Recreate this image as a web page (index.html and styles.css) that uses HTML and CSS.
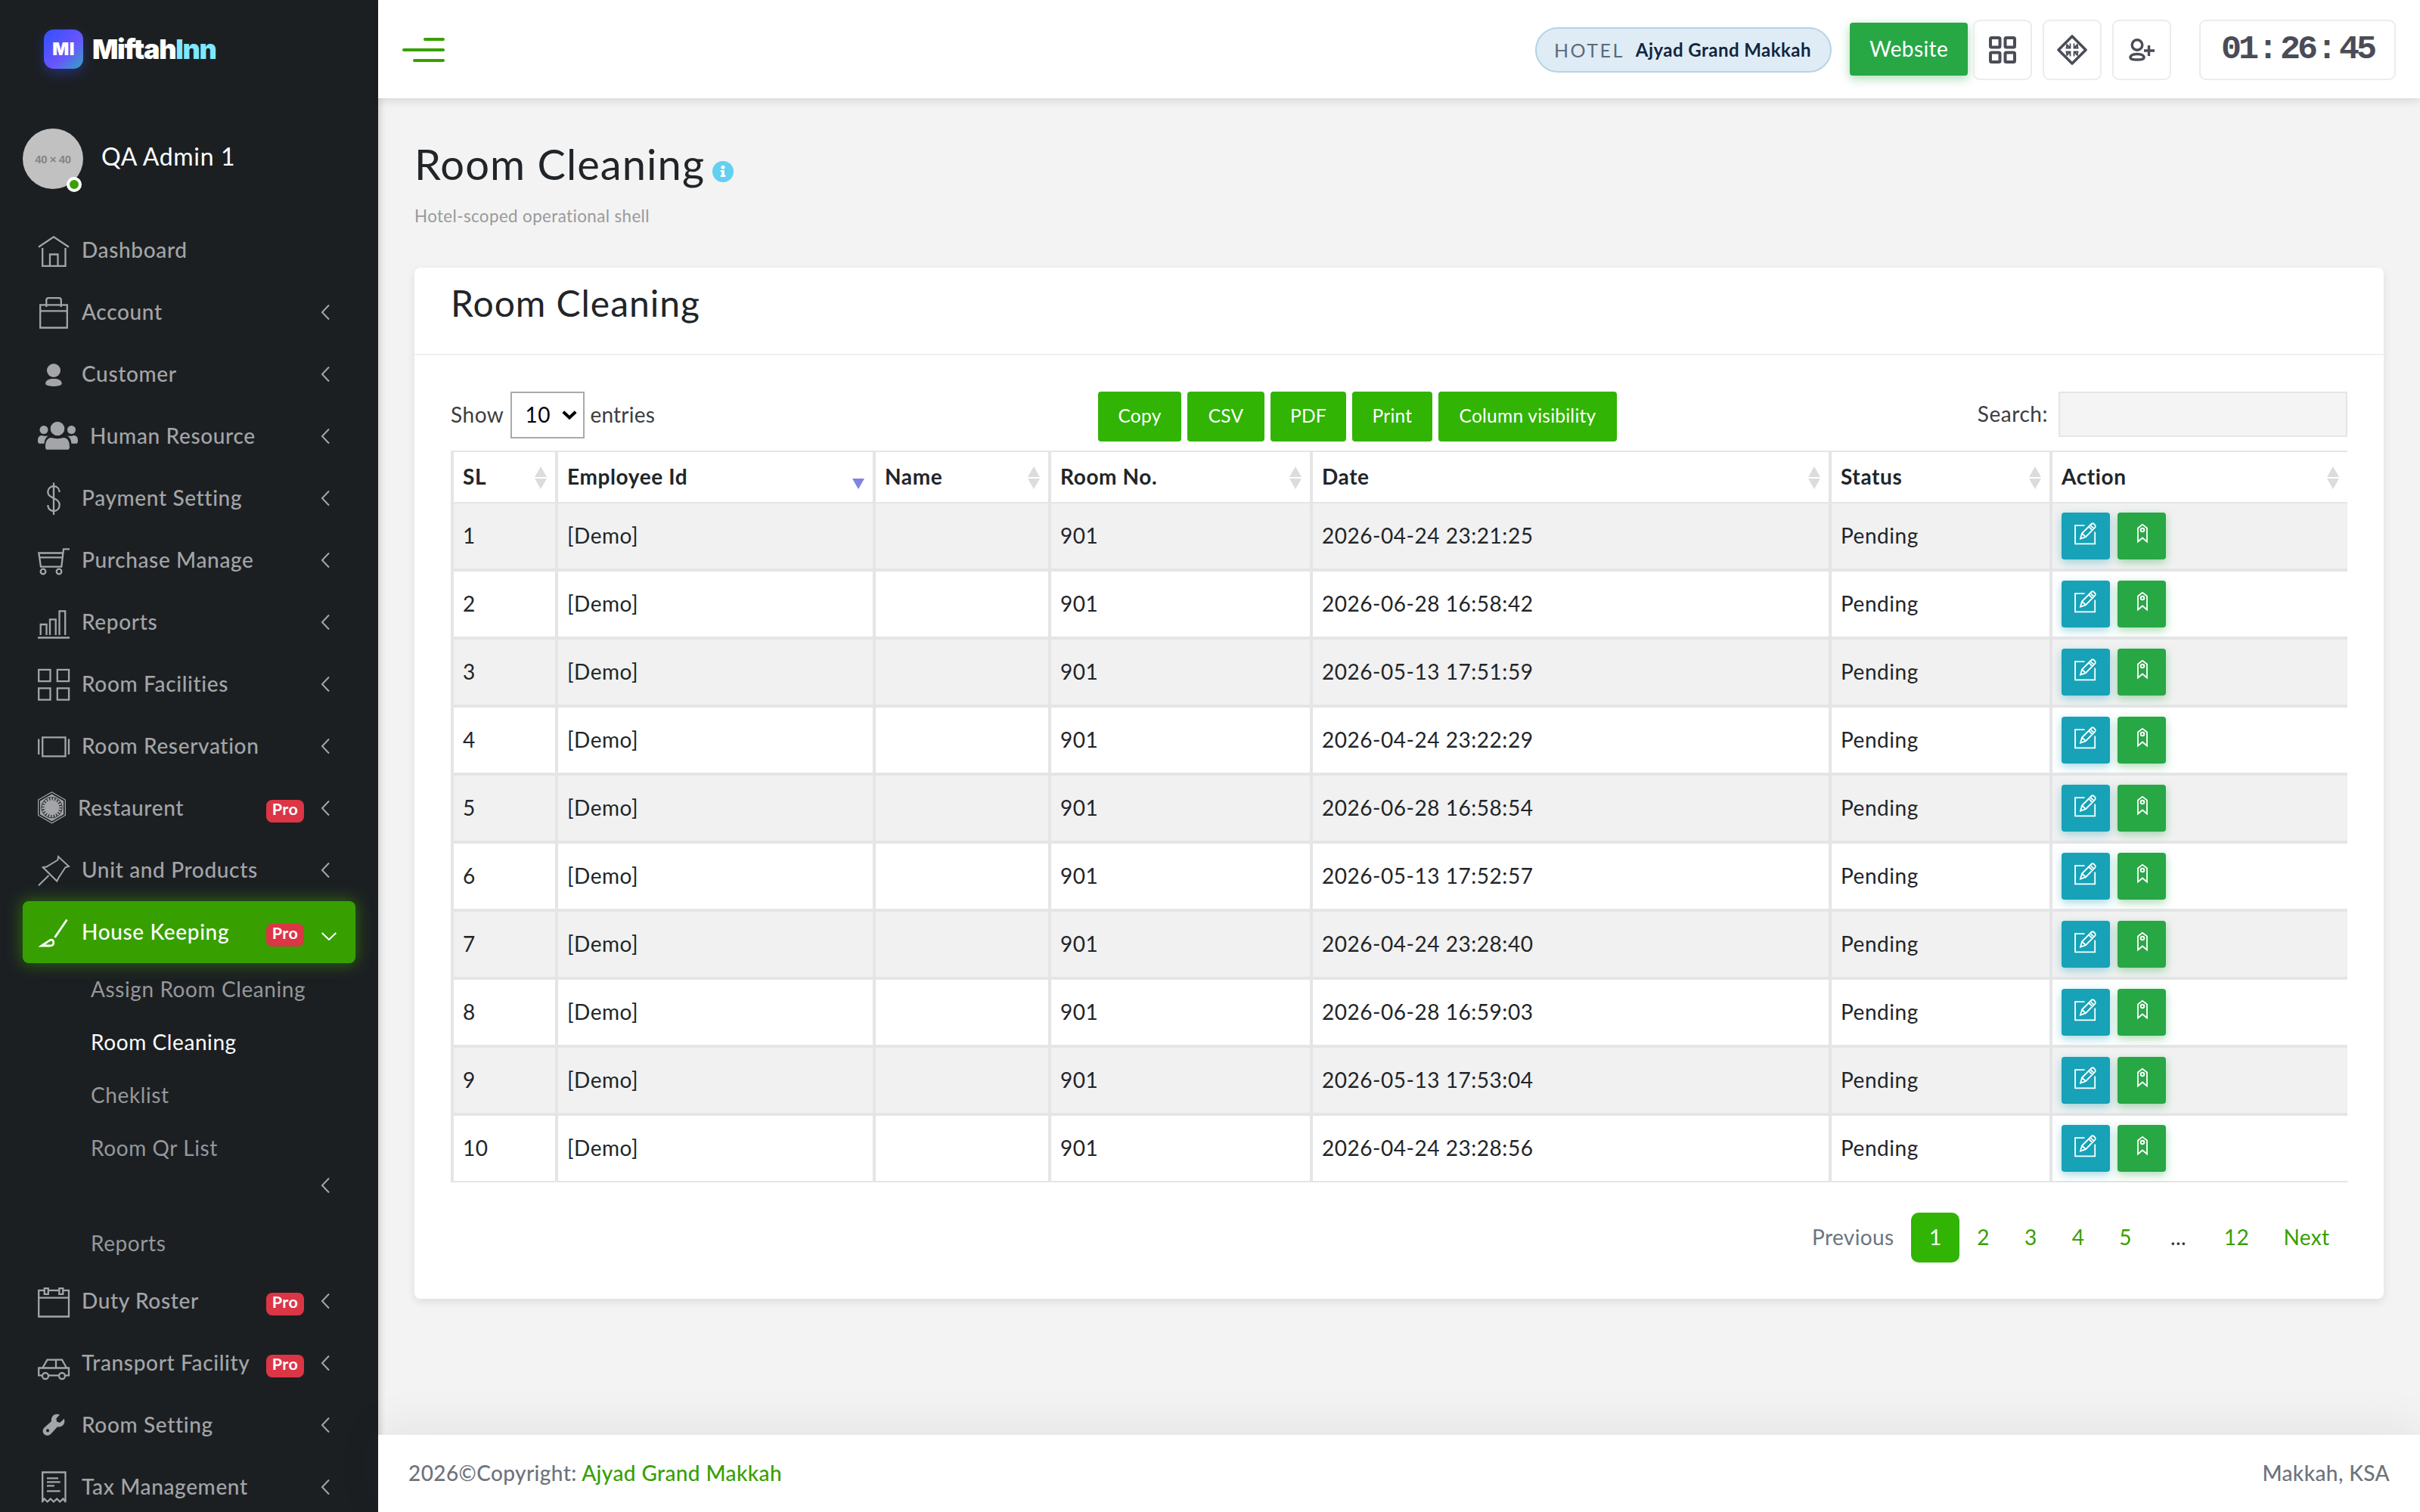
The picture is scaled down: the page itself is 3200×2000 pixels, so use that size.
FILE: index.html
```html
<!DOCTYPE html>
<html lang="en">
<head>
<meta charset="utf-8">
<title>Room Cleaning</title>
<link rel="stylesheet" href="styles.css">
</head>
<body>
<svg class="defs" aria-hidden="true">
  <symbol id="left" viewBox="0 0 20 22" overflow="visible"><path d="M10 1.5 1 11l9 9.500" fill="none" stroke="currentColor" stroke-width="2"/></symbol>
  <symbol id="sort" viewBox="0 0 16 30"><path d="M8 0l8 14H0z M0 16h16L8 30z" fill="#dcdcdc"/></symbol>
  <symbol id="sort-desc" viewBox="0 0 16 30"><path d="M0 16h16L8 30z" fill="#7f85e0"/></symbol>
  <symbol id="edit" viewBox="0 0 29 29" overflow="visible"><g fill="none" stroke="#fff" stroke-width="1.800"><path d="M13.500 4.200H1V28.300H27.200V12.500"/><path d="M8 21.500l2-7L22.500 2q1.600-1.400 3.200 0l1.600 1.600q1.300 1.500 0 3L15 19.200z M10 14.500l5 4.700 M19 5.500l4.800 4.800 M21 3.500l4.800 4.800"/></g></symbol>
  <symbol id="tag" viewBox="0 0 14 25" overflow="visible"><g fill="none" stroke="#fff" stroke-width="1.800"><path d="M1 5.500 7 .8l6 4.700V23.500L7 18.500 1 23.500z"/><circle cx="7" cy="8" r="2.300" stroke-width="2"/></g></symbol>
</svg>
<div class="app">
  <aside class="sidebar">
    <div class="brand"><span class="brand-mark">MI</span><span class="brand-name">Miftah<b>Inn</b></span></div>
    <div class="user">
      <div class="avatar">40 × 40<i class="online"></i></div>
      <span class="user-name">QA Admin 1</span>
    </div>
    <nav class="menu">
      <a class="item"><svg class="ico" viewBox="0 0 42 42"><path d="M1 15.800 21 2.300l20 13.500M6.200 17v23.800H36.500V17M16 40.500V25.500H26.500V40.500"/></svg><span>Dashboard</span></a>
      <a class="item"><svg class="ico" viewBox="0 0 42 42"><path d="M3.200 10.300h35.600v30.200H3.200zM3.200 18.300h35.600M11.300 13V4q0-2.800 2.800-2.800H28q2.800 0 2.800 2.800V13"/></svg><span>Account</span><svg class="chev"><use href="#left"/></svg></a>
      <a class="item"><svg class="ico solid" viewBox="0 0 42 42"><circle cx="21" cy="15" r="9"/><path d="M10.200 32.500c0-5 5-6.500 10.800-6.500s10.700 1.500 10.700 6.500c0 4.700-21.500 4.700-21.500 0z"/></svg><span>Customer</span><svg class="chev"><use href="#left"/></svg></a>
      <a class="item"><svg class="ico solid wide" viewBox="0 0 53 42"><circle cx="26" cy="10" r="9.300"/><circle cx="8" cy="11.500" r="5.500"/><circle cx="44.500" cy="11.500" r="5.500"/><path d="M10 34c0-8 3-12 8-12 5 1.500 11 1.500 16 0 5 0 8 4 8 12 0 3-1 3.800-4 3.800H14c-3 0-4-.8-4-3.800zM0 26c0-5 2-7 5.500-7 3 1 6 1 8.500.5-4 2.500-5 6-5.500 10.300H3C.8 29.800 0 29 0 26zM53 26c0-5-2-7-5.500-7-3 1-6 1-8.500.5 4 2.500 5 6 5.500 10.300H50c2.200 0 3-.8 3-3.800z"/></svg><span>Human Resource</span><svg class="chev"><use href="#left"/></svg></a>
      <a class="item"><svg class="ico" viewBox="0 0 42 42"><path d="M21-.500V42M28.700 12C28.500 7 25 4.200 21 4.200s-7.700 3-7.700 7.300c0 5 4 6.500 7.700 8.500 4.500 2.200 7.700 4 7.700 9 0 4.800-3.500 8-7.700 8s-7.700-3-7.700-8"/></svg><span>Payment Setting</span><svg class="chev"><use href="#left"/></svg></a>
      <a class="item"><svg class="ico" viewBox="0 0 42 42"><path d="M42 5.300H34L31.300 28.700H4L1.300 10.500H33M2 16.300H32"/><circle cx="7" cy="35" r="3.300"/><circle cx="28" cy="35" r="3.300"/></svg><span>Purchase Manage</span><svg class="chev"><use href="#left"/></svg></a>
      <a class="item"><svg class="ico" viewBox="0 0 42 42"><path d="M3.700 37V23h7.800v14M16 37V16.300h7.700V37M28.500 37V5.300h7.700V37M0 40.500H42"/></svg><span>Reports</span><svg class="chev"><use href="#left"/></svg></a>
      <a class="item"><svg class="ico" viewBox="0 0 42 42"><path d="M1.200.8h15.300v15.300H1.200zM25.800.8h15.300v15.300H25.800zM1.200 25.300h15.300v15.300H1.200zM25.800 25.300h15.300v15.300H25.800z"/></svg><span>Room Facilities</span><svg class="chev"><use href="#left"/></svg></a>
      <a class="item"><svg class="ico" viewBox="0 0 42 42"><path d="M6.200 8.300h30.300v25H6.200zM1.200 10.500v20.500M41 10.500v20.500"/></svg><span>Room Reservation</span><svg class="chev"><use href="#left"/></svg></a>
      <a class="item"><svg class="ico narrow" viewBox="0 0 37 42"><path stroke-width="1.300" d="M18.500-1.300 36.300 9v20.500L18.500 39.800.7 29.500V9z"/><path class="fill" d="M18.500 1.500 34 10.500v17.800L18.500 37.200 3 28.300V10.500z"/><circle class="ring" cx="18.500" cy="19.200" r="11.500"/><circle class="ring-edge" cx="18.500" cy="19.200" r="13.800"/></svg><span>Restaurent</span><em class="pro">Pro</em><svg class="chev"><use href="#left"/></svg></a>
      <a class="item"><svg class="ico" viewBox="0 0 42 42"><path stroke-width="2" d="M1 40.300 14.500 27M6.800 16.300l4.700-.8L26.500 6.500 27 2l14 13-4.500 1.300L27.500 30l-2.300 4.500z"/></svg><span>Unit and Products</span><svg class="chev"><use href="#left"/></svg></a>
      <a class="item active"><svg class="ico" viewBox="0 0 42 42"><path stroke-width="2.800" d="M38.500 3.500 22.500 27M5 38 15 31.300q4-2.700 5.500.5Q22 38 16 38z"/></svg><span>House Keeping</span><em class="pro">Pro</em><svg class="chev-down" viewBox="0 0 20 11"><path d="M.7 1 10 10 19.300 1" fill="none" stroke="currentColor" stroke-width="2"/></svg></a>
      <div class="submenu">
        <a>Assign Room Cleaning</a>
        <a class="current">Room Cleaning</a>
        <a>Cheklist</a>
        <a>Room Qr List</a>
        <div class="sub-toggle"><svg class="chev"><use href="#left"/></svg></div>
        <a>Reports</a>
      </div>
      <a class="item"><svg class="ico" viewBox="0 0 42 42"><path d="M8.500 5.800H1.200v34.700H41V5.800H34M15 5.800H28M1.200 15.700H41M8.800 3.200h5v7.600h-5zM28.300 3.200h5v7.600h-5z"/></svg><span>Duty Roster</span><em class="pro">Pro</em><svg class="chev"><use href="#left"/></svg></a>
      <a class="item"><svg class="ico" viewBox="0 0 42 42"><path d="M6 36.300H1.200V26.500H41v9.800H36M14 36.300H28M6.500 26l6-10.300H32L37.800 26M24 15.700V26"/><circle cx="10" cy="37" r="4"/><circle cx="32" cy="37" r="4"/></svg><span>Transport Facility</span><em class="pro">Pro</em><svg class="chev"><use href="#left"/></svg></a>
      <a class="item"><svg class="ico solid" viewBox="0 0 42 42"><path fill-rule="evenodd" d="M29 6.300 24.300 11.500l1 4.200 4.300 1L34.800 11.500C37 18 32.500 23.500 26 22.300L17.500 31.500C14.500 34.800 10.500 34.300 8.300 32 6 29.700 6 25.500 9 23L18 15C17 8.500 22.500 3.500 29 6.300zM13 25.200a2.100 2.100 0 1 0 .1 0z"/></svg><span>Room Setting</span><svg class="chev"><use href="#left"/></svg></a>
      <a class="item"><svg class="ico" viewBox="0 0 42 42"><path d="M6.200 39V.5H36.500V39M12 8.300H27M12 13.300H29.700M12 18.300H22M12 25.300H29.700M5.500 40 8.600 35.500 12.700 39.500 16.800 35.500 21 39.500 25.200 35.500 29.300 39.500 33.400 35.500 37 40"/></svg><span>Tax Management</span><svg class="chev"><use href="#left"/></svg></a>
    </nav>
  </aside>

  <div class="main">
    <header class="topbar">
      <div class="burger"><i></i><i></i><i></i></div>
      <div class="hotel"><span>HOTEL</span><strong>Ajyad Grand Makkah</strong></div>
      <a class="website">Website</a>
      <div class="tools">
        <a class="tool"><svg width="36" height="36" viewBox="0 0 36 36"><g fill="none" stroke="#4a4c57" stroke-width="4"><rect x="2" y="2" width="12.500" height="12.500" rx="1.500"/><rect x="21.500" y="2" width="12.500" height="12.500" rx="1.500"/><rect x="2" y="21.500" width="12.500" height="12.500" rx="1.500"/><rect x="21.500" y="21.500" width="12.500" height="12.500" rx="1.500"/></g></svg></a>
        <a class="tool"><svg width="40" height="40" viewBox="0 0 40 40"><g fill="none" stroke="#4a4c57"><path stroke-width="3.600" stroke-linejoin="round" d="M20 2 38 20 20 38 2 20z"/><path stroke-width="1.800" d="M17.500 11.500v6h-6M17.500 17.500l-5-5M13 13v4M22.500 11.500v6h6M22.500 17.500l5-5M27 13v4M17.500 28.500v-6h-6M17.500 22.500l-5 5M13 27v-4M22.500 28.500v-6h6M22.500 22.500l5 5M27 27v-4"/></g></svg></a>
        <a class="tool"><svg width="34" height="30" viewBox="0 0 34 30"><g fill="none" stroke="#4a4c57" stroke-width="3.400"><circle cx="11" cy="8.500" r="6.800"/><path d="M2 25.500c0-3.500 4-5 9-5s9 1.500 9 5c0 3.400-18 3.400-18 0z"/><path d="M26.500 9v14M20 16h14"/></g></svg></a>
      </div>
      <div class="clock"><span>01</span><i>:</i><span>26</span><i>:</i><span>45</span></div>
    </header>

    <section class="content">
      <h1>Room Cleaning<svg class="info" viewBox="0 0 28 28"><circle cx="14" cy="14" r="14" fill="#63d0f0"/><circle cx="14" cy="8.200" r="2.500" fill="#fff"/><path d="M10.800 12h5v6.500h1.500V21h-6.500v-2.500h1.500v-4h-1.500z" fill="#fff"/></svg></h1>
      <p class="subtitle">Hotel-scoped operational shell</p>

      <div class="card">
        <div class="card-head"><h2>Room Cleaning</h2></div>
        <div class="card-body">
          <div class="controls">
            <div class="length"><span>Show</span><span class="select">10<svg width="20" height="12" viewBox="0 0 20 12"><path d="M1.800 1.800 10 9.500l8.200-7.700" fill="none" stroke="#000" stroke-width="4"/></svg></span><span class="entries">entries</span></div>
            <div class="buttons"><a class="b110">Copy</a><a class="b102">CSV</a><a class="b100">PDF</a><a class="b106">Print</a><a class="b236">Column visibility</a></div>
            <div class="search"><span>Search:</span><span class="field"></span></div>
          </div>
          <table class="grid">
            <colgroup><col class="c1"><col class="c2"><col class="c3"><col class="c4"><col class="c5"><col class="c6"><col class="c7"></colgroup>
            <thead><tr>
              <th><div>SL<svg><use href="#sort"/></svg></div></th>
              <th><div>Employee Id<svg><use href="#sort-desc"/></svg></div></th>
              <th><div>Name<svg><use href="#sort"/></svg></div></th>
              <th><div>Room No.<svg><use href="#sort"/></svg></div></th>
              <th><div>Date<svg><use href="#sort"/></svg></div></th>
              <th><div>Status<svg><use href="#sort"/></svg></div></th>
              <th><div>Action<svg><use href="#sort"/></svg></div></th>
            </tr></thead>
            <tbody>
              <tr><td>1</td><td>[Demo]</td><td></td><td>901</td><td>2026-04-24 23:21:25</td><td>Pending</td><td class="acts"><div><a class="edit"><svg><use href="#edit"/></svg></a><a class="done"><svg><use href="#tag"/></svg></a></div></td></tr>
              <tr><td>2</td><td>[Demo]</td><td></td><td>901</td><td>2026-06-28 16:58:42</td><td>Pending</td><td class="acts"><div><a class="edit"><svg><use href="#edit"/></svg></a><a class="done"><svg><use href="#tag"/></svg></a></div></td></tr>
              <tr><td>3</td><td>[Demo]</td><td></td><td>901</td><td>2026-05-13 17:51:59</td><td>Pending</td><td class="acts"><div><a class="edit"><svg><use href="#edit"/></svg></a><a class="done"><svg><use href="#tag"/></svg></a></div></td></tr>
              <tr><td>4</td><td>[Demo]</td><td></td><td>901</td><td>2026-04-24 23:22:29</td><td>Pending</td><td class="acts"><div><a class="edit"><svg><use href="#edit"/></svg></a><a class="done"><svg><use href="#tag"/></svg></a></div></td></tr>
              <tr><td>5</td><td>[Demo]</td><td></td><td>901</td><td>2026-06-28 16:58:54</td><td>Pending</td><td class="acts"><div><a class="edit"><svg><use href="#edit"/></svg></a><a class="done"><svg><use href="#tag"/></svg></a></div></td></tr>
              <tr><td>6</td><td>[Demo]</td><td></td><td>901</td><td>2026-05-13 17:52:57</td><td>Pending</td><td class="acts"><div><a class="edit"><svg><use href="#edit"/></svg></a><a class="done"><svg><use href="#tag"/></svg></a></div></td></tr>
              <tr><td>7</td><td>[Demo]</td><td></td><td>901</td><td>2026-04-24 23:28:40</td><td>Pending</td><td class="acts"><div><a class="edit"><svg><use href="#edit"/></svg></a><a class="done"><svg><use href="#tag"/></svg></a></div></td></tr>
              <tr><td>8</td><td>[Demo]</td><td></td><td>901</td><td>2026-06-28 16:59:03</td><td>Pending</td><td class="acts"><div><a class="edit"><svg><use href="#edit"/></svg></a><a class="done"><svg><use href="#tag"/></svg></a></div></td></tr>
              <tr><td>9</td><td>[Demo]</td><td></td><td>901</td><td>2026-05-13 17:53:04</td><td>Pending</td><td class="acts"><div><a class="edit"><svg><use href="#edit"/></svg></a><a class="done"><svg><use href="#tag"/></svg></a></div></td></tr>
              <tr><td>10</td><td>[Demo]</td><td></td><td>901</td><td>2026-04-24 23:28:56</td><td>Pending</td><td class="acts"><div><a class="edit"><svg><use href="#edit"/></svg></a><a class="done"><svg><use href="#tag"/></svg></a></div></td></tr>
            </tbody>
          </table>
          <div class="pages"><a class="prev">Previous</a><a class="on">1</a><a>2</a><a>3</a><a>4</a><a>5</a><a class="dots">...</a><a class="w12">12</a><a class="next">Next</a></div>
        </div>
      </div>
    </section>

    <footer class="footer">
      <div>2026©Copyright: <a>Ajyad Grand Makkah</a></div>
      <div>Makkah, KSA</div>
    </footer>
  </div>
</div>
</body>
</html>
```
FILE: styles.css
```css
* { box-sizing: border-box; }
html, body { margin: 0; }
body {
  font-family: Lato, "Liberation Sans", sans-serif;
  font-size: 28px;
  letter-spacing: .019em;
  color: #212529;
  background: #f3f3f3;
}
.defs { position: absolute; width: 0; height: 0; }
.app { display: flex; height: 2000px; overflow: hidden; }

/* Sidebar */
.sidebar {
  flex: none;
  width: 500px;
  height: 2000px;
  overflow: hidden;
  background: #1c1f22;
  box-shadow: 0 0 12px rgba(0, 0, 0, .12);
}
.brand { display: flex; align-items: center; gap: 12px; height: 130px; padding-left: 58px; }
.brand-mark {
  width: 52px; height: 52px; border-radius: 13px;
  display: grid; place-items: center;
  font: 900 23px Inter, sans-serif; letter-spacing: .02em; color: #fff;
  background: linear-gradient(135deg, #3150ff 0%, #6a55ff 58%, #22b8b0 110%);
  box-shadow: 0 6px 16px rgba(49, 80, 255, .35);
}
.brand-name { font: 900 36px Inter, sans-serif; letter-spacing: -.036em; color: #fff; }
.brand-name b { font-weight: 900; color: #7ee8ff; }
.user { display: flex; align-items: center; gap: 24px; height: 160px; padding: 0 0 0 30px; }
.avatar {
  position: relative;
  width: 80px; height: 80px; border-radius: 50%;
  display: grid; place-items: center;
  background: #c1c1c1; color: #858585;
  font: bold 15px "Liberation Sans", sans-serif; letter-spacing: -.03em;
}
.online {
  position: absolute; right: 2px; bottom: -4px;
  width: 20px; height: 20px; border-radius: 50%;
  background: #37a000; border: 4px solid #fff;
}
.user-name { font-size: 32px; letter-spacing: .021em; color: #fff; padding-bottom: 7px; }
.menu { padding: 0 30px; }
.item {
  display: flex; align-items: center;
  height: 82px; padding: 0 34px 0 20px;
  color: #a3a5a8; font-weight: 500; letter-spacing: .023em;
}
.item span { flex: 1; padding-bottom: 2px; margin-left: 16px; white-space: nowrap; }
.ico { flex: none; width: 42px; height: 42px; overflow: visible; margin-top: 2px; fill: none; stroke: currentColor; stroke-width: 2.300; }
.ico.solid { fill: currentColor; stroke: none; }
.ico.wide { width: 53px; }
.ico.narrow { width: 37px; }
.ico .fill { fill: currentColor; stroke: none; }
.ico .ring { stroke: #1c1f22; stroke-width: 3.500; stroke-dasharray: 1.200 2.400; }
.ico .ring-edge { stroke: #1c1f22; stroke-width: .8; }
.chev { flex: none; width: 20px; height: 22px; overflow: visible; margin-right: -9px; color: #a3a5a8; }
.chev-down { flex: none; width: 20px; height: 11px; margin: 10px -9px 0 0; }
.pro {
  display: flex; align-items: center; justify-content: center;
  width: 50px; height: 30px; margin: 7px 23px 0 0; padding-bottom: 5px;
  border-radius: 8px; background: #dc3545; color: #fff;
  font-style: normal; font-weight: 700; font-size: 21.500px; letter-spacing: .02em;
}
.item.active {
  color: #fff; background: #37a000; border-radius: 8px;
  box-shadow: 0 0 20px 2px rgba(55, 160, 0, .55);
}
.submenu { height: 406px; padding-left: 90px; }
.submenu a { display: flex; align-items: center; height: 70px; padding-bottom: 2px; color: #96989b; letter-spacing: .021em; }
.submenu .current { color: #fff; }
.sub-toggle { display: flex; justify-content: flex-end; height: 56px; padding: 3px 34px 0 0; }

/* Top bar */
.main { flex: 1; display: flex; flex-direction: column; min-width: 0; box-shadow: inset 12px 0 12px -12px rgba(0, 0, 0, .12); }
.topbar {
  display: flex; align-items: center;
  height: 130px; padding: 2px 32px 0;
  background: #fff; box-shadow: 0 2px 12px rgba(0, 0, 0, .14);
}
.burger { display: flex; flex-direction: column; align-items: flex-end; gap: 10px; width: 56px; margin-right: auto; }
.burger i { height: 4px; width: 28px; border-radius: 2px; background: #37a000; }
.burger i:nth-child(2) { width: 56px; }
.burger i:nth-child(3) { width: 42px; }
.hotel {
  display: flex; align-items: center; gap: 18px;
  width: 392px; height: 60px; padding: 0 0 1px 23px; margin-right: 24px;
  border: 2px solid #b4d4e6; border-radius: 30px;
  background: #dfecf5; font-size: 24px; color: #12263f;
  white-space: nowrap;
}
.hotel span { font-size: 25px; letter-spacing: .1em; color: #5b6b7d; }
.hotel strong { letter-spacing: .019em; margin-left: -3px; }
.website {
  display: flex; align-items: center; justify-content: center;
  width: 156px; height: 70px; padding-bottom: 2px; margin: 0 7px 2px 0;
  border-radius: 4px; background: #28a745; color: #fff; letter-spacing: .014em;
  box-shadow: 0 4px 14px rgba(40, 167, 69, .4);
}
.tools { display: flex; gap: 14px; margin-right: 37px; }
.tool { display: grid; place-items: center; width: 78px; height: 80px; border: 2px solid #ececec; border-radius: 9px; }
.clock {
  display: flex; align-items: center; justify-content: center;
  width: 260px; height: 80px; padding-bottom: 2px;
  border: 2px solid #ececec; border-radius: 9px; color: #4a4c57;
  font: bold 45px "Liberation Mono", monospace; letter-spacing: -4px;
}
.clock i { font-style: normal; width: 32px; text-align: center; letter-spacing: 0; }

/* Content */
.content { padding: 52px 48px 0; height: 1768px; }
h1 { display: flex; align-items: center; height: 68px; margin: 0; padding-top: 1px; font-size: 56px; font-weight: 400; letter-spacing: .019em; white-space: nowrap; }
.info { width: 28px; height: 28px; margin: 21px 0 0 10px; }
.subtitle { margin: 22px 0 54px; height: 28px; line-height: 28px; font-size: 22.400px; letter-spacing: .017em; color: #989a9c; }
.card { height: 1364px; background: #fff; border-radius: 8px; box-shadow: 0 4px 12px rgba(0, 0, 0, .09); }
.card-head { height: 116px; padding: 18px 48px 0; border-bottom: 2px solid #eff1f4; }
h2 { margin: 0; font-size: 48px; line-height: 58px; font-weight: 400; letter-spacing: .02em; }
.card-body { padding: 48px; }
.controls { display: grid; grid-template-columns: 856px auto 1fr; height: 78px; align-items: start; color: #3b3d40; }
.length { display: flex; align-items: center; height: 62px; gap: 9px; }
.length > span { padding-bottom: 2px; }
.length .select {
  display: flex; align-items: center; justify-content: space-between;
  width: 98px; height: 62px; padding: 0 8px 2px 17px;
  border: 2px solid #aaa; color: #000;
}
.length .select svg { margin-top: 2px; }
.length .entries { margin-left: -2px; letter-spacing: .008em; }
.buttons { display: flex; gap: 8px; }
.buttons a {
  display: flex; align-items: center; justify-content: center;
  height: 66px; padding-bottom: 3px; border-radius: 4px;
  background: #31b404; color: #fff; font-size: 24.500px; letter-spacing: .01em;
}
.b110 { width: 110px; } .b102 { width: 102px; } .b100 { width: 100px; } .b106 { width: 106px; } .b236 { width: 236px; }
.search { display: flex; justify-content: flex-end; align-items: center; gap: 14px; height: 60px; }
.search span:first-child { padding-bottom: 2px; }
.field { width: 382px; height: 60px; background: #f4f4f4; border: 2px solid #e4e5e7; }

.grid { width: 2508px; table-layout: fixed; border-collapse: separate; border-spacing: 0; }
.c1 { width: 138px; } .c2 { width: 420px; } .c3 { width: 232px; } .c4 { width: 346px; }
.c5 { width: 686px; } .c6 { width: 292px; } .c7 { width: 394px; }
.grid th, .grid td { text-align: left; border: 0 solid #e4e5e7; border-left-width: 4px; padding: 0 11px 2px 12px; }
.grid th { height: 70px; border-top-width: 2px; border-bottom-width: 2px; padding-bottom: 0; letter-spacing: .022em; }
.grid th div { display: flex; justify-content: space-between; align-items: center; line-height: 34px; padding-bottom: 2px; }
.grid th svg { width: 16px; height: 30px; margin-top: 3px; }
.grid td { height: 90px; border-bottom-width: 4px; }
.grid tr:last-child td { height: 88px; border-bottom-width: 2px; }
.grid tr:only-child th { height: 70px; }
.grid tbody tr:nth-child(odd) { background: #f1f1f1; }
.grid .acts { padding-bottom: 0; }
.acts div { display: flex; gap: 10px; }
.acts a { display: flex; align-items: center; justify-content: center; width: 64px; height: 62px; padding-bottom: 7px; border-radius: 4px; }
.acts .edit { background: #17a2b8; box-shadow: 0 4px 12px rgba(23, 162, 184, .4); }
.acts .done { background: #28a745; box-shadow: 0 4px 12px rgba(40, 167, 69, .4); }
.edit svg { width: 29px; height: 29px; overflow: visible; margin-right: 1px; }
.done svg { width: 14px; height: 25px; overflow: visible; margin-left: 2px; }

.pages { display: flex; justify-content: flex-end; margin-top: 40px; height: 66px; letter-spacing: .014em; }
.pages a { display: flex; align-items: center; justify-content: center; width: 62.700px; padding-bottom: 2px; color: #37a000; }
.pages .prev { width: 154px; color: #6c757d; }
.pages .on { width: 64px; background: #31b404; border-radius: 10px; color: #fff; }
.pages .dots { width: 77px; color: #333; }
.pages .w12 { width: 77px; }
.pages .next { width: 108px; }

.footer {
  display: flex; justify-content: space-between; align-items: center;
  height: 102px; padding: 0 40px 2px;
  background: #fff; color: #6f737b; font-weight: 500; letter-spacing: .014em;
  box-shadow: 0 -10px 60px rgba(30, 35, 60, .07);
}
.footer a { color: #37a000; }
```
